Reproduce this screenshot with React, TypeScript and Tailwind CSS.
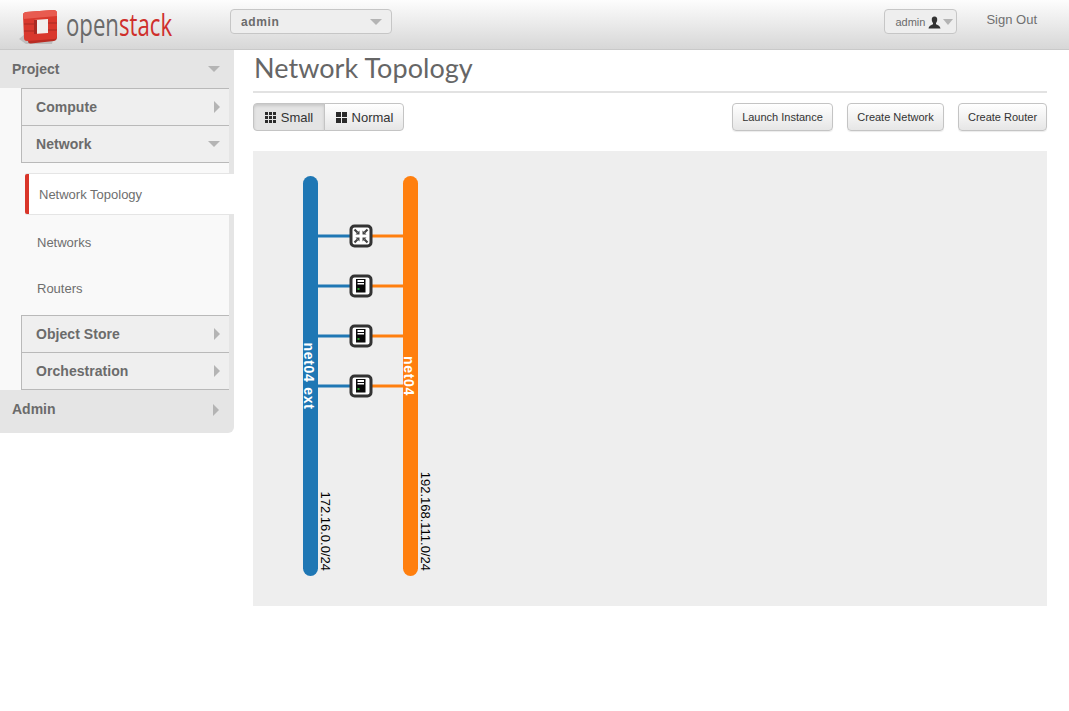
const caret = {
  down: 'w-0 h-0 border-x-[6px] border-x-transparent border-t-[6px] border-t-[#b4b4b4]',
  right: 'w-0 h-0 border-y-[6px] border-y-transparent border-l-[6px] border-l-[#b4b4b4]',
};

function Logo() {
  return (
    <svg width="160" height="40" viewBox="0 0 160 40" className="shrink-0">
      <path d="M3 33 L9 28 L38 30 L36 38 L10 38 Z" fill="#a0a0a0" opacity="0.5" />
      {/* side and bottom of the block */}
      <path d="M7 9 L12 35 Q12 38 15 37.5 L38 35 Q41 34.5 41 31 L41 10 Z" fill="#b92c23" />
      {/* front face */}
      <path d="M7 9 Q7 6.5 10 6 L37 4 Q41 4 41 7 L41 30 Q41 33 38 33 L11 35 Q8 35 8 32 Z" fill="#d9382d" />
      <path d="M7 9 Q7 6.5 10 6 L37 4 Q41 4 41 7 L41 10 L7.5 13 Z" fill="#e85b50" />
      <path d="M18 14 L32 13 L32 27 L18 28 Z" fill="#f2efed" />
      <path d="M18 14 L21 14 L21 28 L18 28 Z" fill="#a92a22" />
      <path d="M8 18 L18 18 M8 25 L18 25 M32 17 L41 17 M32 24 L41 24" stroke="#a92a22" strokeWidth="1" />
      <text transform="translate(50 30) scale(0.716 1)" fontSize="31" fill="#6a6a6a" fontFamily="'Open Sans', sans-serif">open</text>
      <text transform="translate(103 30) scale(0.716 1)" fontSize="31" fill="#cf2f2b" fontFamily="'Open Sans', sans-serif">stack</text>
    </svg>
  );
}

function Group({ label, open, top }: { label: string; open?: boolean; top?: boolean }) {
  return (
    <div className={`ml-[21px] ${top ? 'h-[38px] border-t' : 'h-[37px]'} flex items-center justify-between pl-[14px] pr-[9px] bg-[#efefef] border-l border-b border-[#b9b9b9] text-[14px] font-bold tracking-[0.05px] text-[#6b6b6b]`}>
      <span>{label}</span>
      <span className={open ? caret.down : caret.right} />
    </div>
  );
}

function Sidebar() {
  return (
    <aside className="w-[234px] shrink-0 self-start bg-[#e5e5e5] rounded-br-[6px]">
      <div className="h-[38px] flex items-center justify-between pl-3 pr-[14px] text-[14px] font-bold text-[#6b6b6b]">
        <span>Project</span>
        <span className={caret.down} />
      </div>
      <div className="w-[229px] bg-[#f9f9f9]">
        <Group label="Compute" top />
        <Group label="Network" open />
        <div className="pt-[11px] h-[152px] text-[13px] text-[#6e6e6e]">
          <div className="w-[209px] h-[40px] ml-[25px] pt-px bg-white border-l-4 border-[#d9362a] rounded-l-[2px] shadow-[0_-1px_0_#e5e5e5,0_1px_0_#e5e5e5] flex items-center pl-[10px]">
            Network Topology
          </div>
          <div className="ml-[37px] mt-[19px] leading-[20px]">Networks</div>
          <div className="ml-[37px] mt-[26px] leading-[20px]">Routers</div>
        </div>
        <Group label="Object Store" top />
        <Group label="Orchestration" />
      </div>
      <div className="h-[43px] pb-[4px] flex items-center justify-between pl-3 pr-[15px] text-[14px] font-bold text-[#6b6b6b]">
        <span>Admin</span>
        <span className={caret.right} />
      </div>
    </aside>
  );
}

function ActionButton({ label, w }: { label: string; w: string }) {
  return (
    <button className={`${w} h-[28px] rounded-[4px] border border-[#c4c4c4] bg-gradient-to-b from-white to-[#e6e6e6] text-[11px] text-[#333] shadow-[0_1px_1px_rgba(0,0,0,0.08)]`}>
      {label}
    </button>
  );
}

function GridIcon({ n }: { n: 2 | 3 }) {
  const cells = n === 3 ? [0, 4, 8] : [0, 6];
  const s = n === 3 ? 3 : 5;
  return (
    <svg width="11" height="11" viewBox="0 0 11 11">
      {cells.map((x) => cells.map((y) => <rect key={`${x}-${y}`} x={x} y={y} width={s} height={s} fill="#2b2b2b" />))}
    </svg>
  );
}

function Links({ y }: { y: number }) {
  return (
    <>
      <rect x="65" y={y - 1.5} width="34" height="3" fill="#1f77b4" />
      <rect x="117" y={y - 1.5} width="33" height="3" fill="#ff7f0e" />
    </>
  );
}

function Router({ y }: { y: number }) {
  return (
    <g transform={`translate(108 ${y})`}>
      <rect x="-10" y="-10" width="20" height="20" rx="3.5" fill="#fff" stroke="#333" strokeWidth="3" />
      <path d="M-6.5 -6.5 L-3.5 -3.5 M6.5 -6.5 L3.5 -3.5 M-6.5 6.5 L-3.5 3.5 M6.5 6.5 L3.5 3.5" stroke="#444" strokeWidth="2.2" fill="none" />
      <path d="M-1.5 -1.5 L-1.5 -5.5 L-5.5 -1.5 Z M1.5 -1.5 L5.5 -1.5 L1.5 -5.5 Z M-1.5 1.5 L-5.5 1.5 L-1.5 5.5 Z M1.5 1.5 L1.5 5.5 L5.5 1.5 Z" fill="#444" />
    </g>
  );
}

function Server({ y }: { y: number }) {
  return (
    <g transform={`translate(108 ${y})`}>
      <rect x="-10" y="-10" width="20" height="20" rx="3.5" fill="#fff" stroke="#333" strokeWidth="3" />
      <rect x="-5" y="-7" width="9.5" height="13.5" fill="#0a0a0a" />
      <rect x="-3.5" y="-6" width="6.5" height="2" fill="#fff" />
      <rect x="-3.5" y="-3" width="6.5" height="1.5" fill="#fff" />
      <rect x="-3.5" y="2" width="2" height="2" fill="#2fa02f" />
    </g>
  );
}

function Topology() {
  return (
    <div className="mt-5 w-full h-[455px] bg-[#eeeeee]">
      <svg width="794" height="455" viewBox="0 0 794 455">
        <rect x="50" y="25" width="15" height="400" rx="7.5" fill="#1f77b4" />
        <rect x="150" y="25" width="15" height="400" rx="7.5" fill="#ff7f0e" />
        {[85, 135, 185, 235].map((y) => (
          <Links key={y} y={y} />
        ))}
        <Router y={85} />
        <Server y={135} />
        <Server y={185} />
        <Server y={235} />
        <g fontFamily="'Liberation Sans', Arial, sans-serif">
          <text transform="translate(51 225) rotate(90)" textAnchor="middle" fontSize="14" fontWeight="bold" letterSpacing="0.7" fill="#fff">net04 ext</text>
          <text transform="translate(151 225) rotate(90)" textAnchor="middle" fontSize="14" fontWeight="bold" letterSpacing="0.7" fill="#fff">net04</text>
          <text transform="translate(68 420) rotate(90)" textAnchor="end" fontSize="13" fill="#000">172.16.0.0/24</text>
          <text transform="translate(168 420) rotate(90)" textAnchor="end" fontSize="13" fill="#000">192.168.111.0/24</text>
        </g>
      </svg>
    </div>
  );
}

export default function App() {
  return (
    <div className="min-h-[711px] bg-white font-['Liberation_Sans',Arial,sans-serif]">
      <header className="h-[50px] flex items-start bg-gradient-to-b from-[#fdfdfd] to-[#d7d7d7] border-b border-[#c9c9c9]">
        <div className="pl-[16px] pt-[6px]">
          <Logo />
        </div>
        <div className="ml-[54px] mt-[9px] w-[162px] h-[25px] flex items-center justify-between pl-[10px] pr-[9px] pt-px rounded-[4px] border border-[#c6c6c6] bg-[#eeeeee] text-[12px] font-bold text-[#6b6b6b] tracking-[0.6px]">
          <span>admin</span>
          <span className={caret.down} />
        </div>
        <div className="ml-auto mt-[9px] w-[73px] h-[25px] flex items-center pl-[10px] pt-px rounded-[4px] border border-[#c6c6c6] bg-[#eeeeee] text-[11px] text-[#6b6b6b]">
          <span>admin</span>
          <svg width="13" height="13" viewBox="0 0 13 13" className="ml-[3px]">
            <path d="M6.5 0.5 C4.4 0.5 3.6 2 3.8 4 C3.9 5.4 4.5 6.4 5 7 L5 8.2 C3.6 9 1 9.4 0.5 12.5 L12.5 12.5 C12 9.4 9.4 9 8 8.2 L8 7 C8.5 6.4 9.1 5.4 9.2 4 C9.4 2 8.6 0.5 6.5 0.5 Z" fill="#333" />
          </svg>
          <span className="ml-[2px] w-0 h-0 border-x-[5px] border-x-transparent border-t-[6px] border-t-[#b4b4b4]" />
        </div>
        <div className="ml-[29px] mr-[32px] mt-[10px] text-[13px] text-[#707070]">Sign Out</div>
      </header>
      <div className="flex">
        <Sidebar />
        <main className="ml-[19px] w-[794px]">
          <h1 className="h-[43px] border-b-2 border-[#e2e2e2] pl-px text-[27px] leading-[36px] tracking-[0.05px] text-[#666] font-['Lato',sans-serif]">
            Network Topology
          </h1>
          <div className="mt-[10px] flex items-center">
            <div className="flex h-[28px] text-[13px] text-[#333]">
              <button className="w-[72px] pt-px flex items-center justify-center gap-[5px] rounded-l-[4px] border border-[#c4c4c4] bg-[#e4e4e4] shadow-[inset_0_2px_3px_rgba(0,0,0,0.12)]">
                <GridIcon n={3} />
                Small
              </button>
              <button className="w-[80px] pt-px pl-px -ml-px flex items-center justify-center gap-[5px] rounded-r-[4px] border border-[#c4c4c4] bg-gradient-to-b from-white to-[#e6e6e6]">
                <GridIcon n={2} />
                Normal
              </button>
            </div>
            <div className="ml-auto flex gap-[14px]">
              <ActionButton label="Launch Instance" w="w-[101px]" />
              <ActionButton label="Create Network" w="w-[97px]" />
              <ActionButton label="Create Router" w="w-[89px]" />
            </div>
          </div>
          <Topology />
        </main>
      </div>
    </div>
  );
}
